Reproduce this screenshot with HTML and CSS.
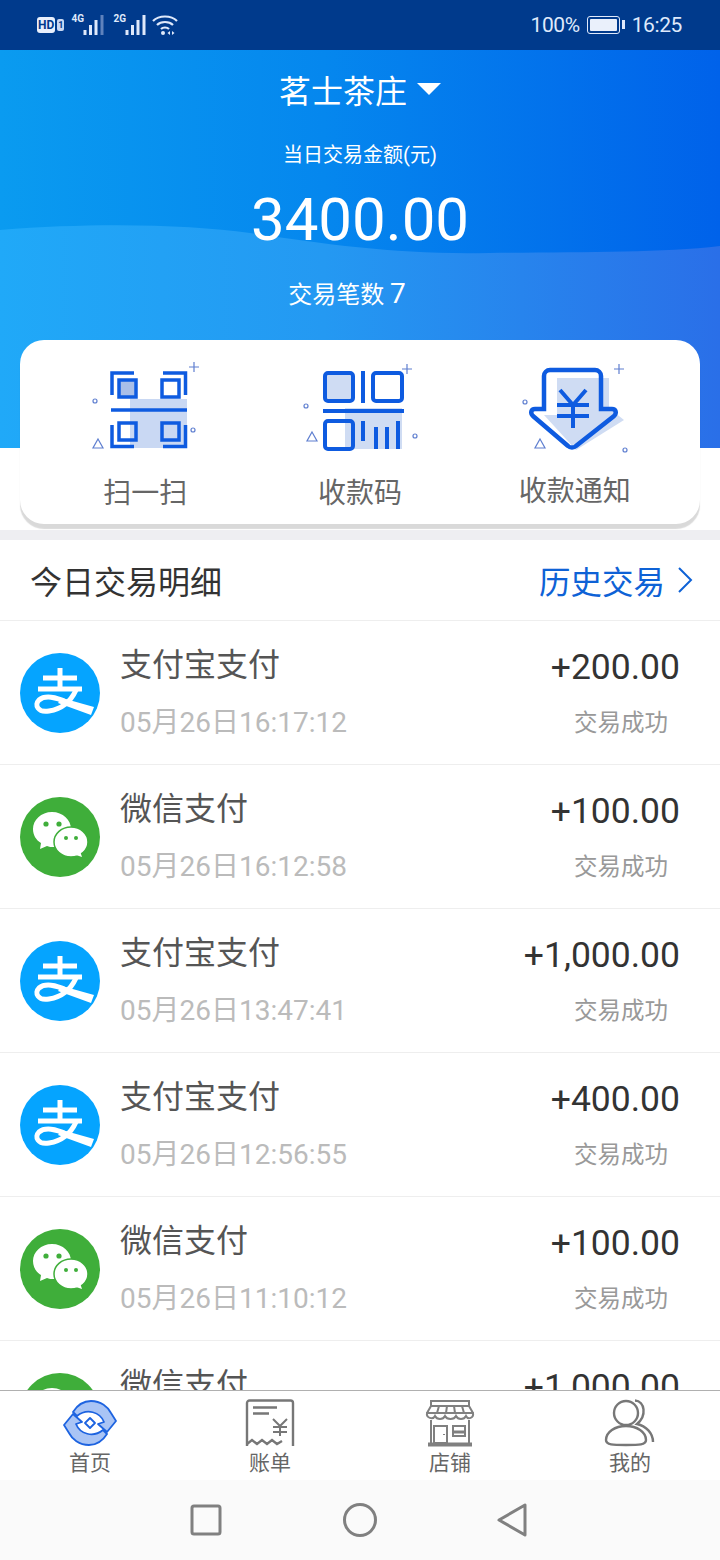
FILE: index.html
```html
<!DOCTYPE html>
<html lang="zh-CN">
<head>
    <meta charset="UTF-8">
    <meta name="viewport" content="width=device-width, initial-scale=1.0">
    <title>今日交易明细</title>
    <link rel="stylesheet" href="styles.css">
</head>
<body>
    <svg class="sprites" width="0" height="0">
        <symbol id="alipay" viewBox="0 0 80 80">
            <circle cx="40" cy="40" r="40" fill="#05a4ff"/>
            <g fill="none" stroke="#fff" stroke-width="5">
                <path d="M23 25H57M40 15V35M18 36H62"/>
                <path d="M56 37C51 48 42 56 29 58C18 60 14 52 19 47C25 42 36 44 46 49"/>
            </g>
            <path d="M42 45L74 54L71 62L38 50Z" fill="#fff"/>
        </symbol>
        <symbol id="wechat" viewBox="0 0 80 80">
            <circle cx="40" cy="40" r="40" fill="#3fae3a"/>
            <path d="M32 15C21 15 13 23 13 32C13 38 16 43 21 46L20 52L27 49C29 50 31 50 34 50C46 50 51 42 51 32C51 23 43 15 32 15Z" fill="#fff"/>
            <ellipse cx="51" cy="45" rx="17" ry="15" fill="#fff" stroke="#3fae3a" stroke-width="1.500"/>
            <path d="M56 58L62 60L60 54Z" fill="#fff"/>
            <circle cx="26" cy="27" r="2.600" fill="#3fae3a"/>
            <circle cx="39" cy="27" r="2.600" fill="#3fae3a"/>
            <circle cx="46" cy="41" r="2" fill="#3fae3a"/>
            <circle cx="56" cy="41" r="2" fill="#3fae3a"/>
        </symbol>
        <symbol id="signal" viewBox="0 0 22 22">
            <path d="M2 16V21M7.500 11V21M13 6V21M19 1V21" fill="none" stroke="#dfe9fb" stroke-width="3"/>
        </symbol>
        <symbol id="signal-weak" viewBox="0 0 22 22">
            <path d="M2 16V21M7.500 11V21M13 6V21" fill="none" stroke="#dfe9fb" stroke-width="3"/>
            <path d="M19 1V21" fill="none" stroke="#5f82bd" stroke-width="3"/>
        </symbol>
    </svg>

    <div class="screen">
        <div class="status-bar">
            <div class="status-left">
                <span class="hd">HD</span><span class="hd-sim">1</span>
                <span class="net">4G</span><svg class="signal"><use href="#signal-weak"/></svg>
                <span class="net net-second">2G</span><svg class="signal"><use href="#signal"/></svg>
                <svg class="wifi" width="26" height="22" viewBox="0 0 26 22">
                    <g fill="none" stroke="#dfe9fb" stroke-width="2.200">
                        <path d="M1 7C7 1 19 1 25 7"/>
                        <path d="M5 11C9 7 17 7 21 11"/>
                        <path d="M9 15C11 13 15 13 17 15"/>
                    </g>
                    <circle cx="11" cy="19" r="2" fill="#dfe9fb"/>
                    <path d="M18 17V21L15.500 19ZM20 17V21L22.500 19Z" fill="#dfe9fb"/>
                </svg>
            </div>
            <div class="status-right">
                <span>100%</span>
                <span class="battery"><span class="battery-fill"></span></span>
                <span>16:25</span>
            </div>
        </div>

        <div class="main">
            <div class="hero">
                <svg class="hero-wave" viewBox="0 0 720 398" preserveAspectRatio="none">
                    <defs>
                        <linearGradient id="waveFill" x1="0" y1="0" x2="1" y2="0">
                            <stop offset="0" stop-color="#20a9f8"/>
                            <stop offset="0.45" stop-color="#2499f2"/>
                            <stop offset="1" stop-color="#2a6fe8"/>
                        </linearGradient>
                    </defs>
                    <path d="M0 180C100 172 190 175 250 183C330 195 400 205 490 203C580 202 660 203 720 196V398H0Z" fill="url(#waveFill)"/>
                </svg>
                <div class="hero-title">茗士茶庄<span class="caret"></span></div>
                <div class="hero-sub">当日交易金额(元)</div>
                <div class="hero-amount">3400.00</div>
                <div class="hero-count">交易笔数 <span class="hero-count-num">7</span></div>
            </div>

            <div class="actions-wrap">
                <div class="actions">
                    <div class="action">
                        <svg class="action-icon" viewBox="0 0 130 100">
                            <rect x="50" y="41" width="57" height="49" fill="#c9d8f3"/>
                            <rect x="39" y="22" width="17" height="17" fill="#a9bfe8"/>
                            <g fill="none" stroke="#0e5be0" stroke-width="3.500">
                                <path d="M54 15H32V37M83 15H105.500V37M32 67V88.500H54M105.500 67V88.500H83"/>
                                <rect x="39" y="22" width="17" height="17"/>
                                <rect x="82" y="22" width="17" height="17"/>
                                <rect x="39" y="65" width="17" height="17"/>
                                <rect x="82" y="65" width="17" height="17"/>
                                <path d="M31 52H107"/>
                            </g>
                            <g fill="none" stroke="#5f7fd0" stroke-width="1.200">
                                <path d="M114 4V14M109 9H119"/>
                                <circle cx="15" cy="43" r="2"/>
                                <circle cx="113" cy="72" r="2"/>
                                <path d="M18 81L23 90H13Z"/>
                            </g>
                        </svg>
                        <div class="action-label">扫一扫</div>
                    </div>
                    <div class="action">
                        <svg class="action-icon" viewBox="0 0 130 100">
                            <rect x="30" y="15" width="28" height="28" rx="3" fill="#cfdcf3"/>
                            <rect x="50" y="50" width="57" height="41" fill="#cfdcf3"/>
                            <g fill="none" stroke="#0e5be0" stroke-width="4">
                                <rect x="30" y="15" width="28" height="28" rx="3"/>
                                <rect x="78" y="15" width="29" height="28" rx="3"/>
                                <rect x="30" y="63" width="28" height="28" rx="3"/>
                                <path d="M68 13V45M28 53H109M68 63V83M81 69V91M92 69V91M103 63V91"/>
                            </g>
                            <g fill="none" stroke="#5f7fd0" stroke-width="1.200">
                                <path d="M112 6V16M107 11H117"/>
                                <circle cx="11" cy="48" r="2"/>
                                <circle cx="120" cy="78" r="2"/>
                                <path d="M17 74L22 83H12Z"/>
                            </g>
                        </svg>
                        <div class="action-label">收款码</div>
                    </div>
                    <div class="action action-alt">
                        <svg class="action-icon" viewBox="0 0 130 100">
                            <path d="M47 20H99V50L114 62L66 92L34 57H47Z" fill="#cfdcf3"/>
                            <path d="M34 18A6 6 0 0 1 40 12H85A6 6 0 0 1 91 18V51H102C106 51 107 55 104 58L66 88C64 90 60 90 58 88L23 58C20 55 21 51 25 51H34Z" fill="none" stroke="#0e5be0" stroke-width="4.500"/>
                            <path d="M50 32L63 47L76 32M47 47H79M47 58H79M63 47V70" fill="none" stroke="#0e5be0" stroke-width="4"/>
                            <g fill="none" stroke="#5f7fd0" stroke-width="1.200">
                                <path d="M109 6V16M104 11H114"/>
                                <circle cx="15" cy="44" r="2"/>
                                <circle cx="115" cy="92" r="2"/>
                                <path d="M30 81L35 90H25Z"/>
                            </g>
                        </svg>
                        <div class="action-label">收款通知</div>
                    </div>
                </div>
            </div>

            <div class="section-gap"></div>

            <div class="list-head">
                <span class="list-title">今日交易明细</span>
                <span class="list-link">历史交易
                    <svg class="chevron" width="16" height="28" viewBox="0 0 16 28">
                        <path d="M2 2L14 14L2 26" fill="none" stroke="#0e62d6" stroke-width="2"/>
                    </svg>
                </span>
            </div>

            <div class="trade">
                <svg class="trade-icon"><use href="#alipay"/></svg>
                <div class="trade-info">
                    <div class="trade-name">支付宝支付</div>
                    <div class="trade-time">05月26日16:17:12</div>
                </div>
                <div class="trade-side">
                    <div class="trade-amount">+200.00</div>
                    <div class="trade-state">交易成功</div>
                </div>
            </div>
            <div class="trade">
                <svg class="trade-icon"><use href="#wechat"/></svg>
                <div class="trade-info">
                    <div class="trade-name">微信支付</div>
                    <div class="trade-time">05月26日16:12:58</div>
                </div>
                <div class="trade-side">
                    <div class="trade-amount">+100.00</div>
                    <div class="trade-state">交易成功</div>
                </div>
            </div>
            <div class="trade">
                <svg class="trade-icon"><use href="#alipay"/></svg>
                <div class="trade-info">
                    <div class="trade-name">支付宝支付</div>
                    <div class="trade-time">05月26日13:47:41</div>
                </div>
                <div class="trade-side">
                    <div class="trade-amount">+1,000.00</div>
                    <div class="trade-state">交易成功</div>
                </div>
            </div>
            <div class="trade">
                <svg class="trade-icon"><use href="#alipay"/></svg>
                <div class="trade-info">
                    <div class="trade-name">支付宝支付</div>
                    <div class="trade-time">05月26日12:56:55</div>
                </div>
                <div class="trade-side">
                    <div class="trade-amount">+400.00</div>
                    <div class="trade-state">交易成功</div>
                </div>
            </div>
            <div class="trade">
                <svg class="trade-icon"><use href="#wechat"/></svg>
                <div class="trade-info">
                    <div class="trade-name">微信支付</div>
                    <div class="trade-time">05月26日11:10:12</div>
                </div>
                <div class="trade-side">
                    <div class="trade-amount">+100.00</div>
                    <div class="trade-state">交易成功</div>
                </div>
            </div>
            <div class="trade">
                <svg class="trade-icon"><use href="#wechat"/></svg>
                <div class="trade-info">
                    <div class="trade-name">微信支付</div>
                </div>
                <div class="trade-side">
                    <div class="trade-amount">+1,000.00</div>
                </div>
            </div>
        </div>

        <div class="tab-bar">
            <div class="tab">
                <svg class="tab-icon" viewBox="0 0 54 48">
                    <g fill="#a9c4f5" stroke="#1d63e0" stroke-width="1.800" stroke-linejoin="round">
                        <path d="M10 13C15 5 22 2 28 2C38 2 45 8 48 14L53 22L44 33L35 25L41 23C37 13 24 9 14 17Z"/>
                        <path transform="rotate(180 27 24)" d="M10 13C15 5 22 2 28 2C38 2 45 8 48 14L53 22L44 33L35 25L41 23C37 13 24 9 14 17Z"/>
                        <path d="M27 19L32 24L27 29L22 24Z" fill="#fff"/>
                    </g>
                </svg>
                <span class="tab-label">首页</span>
            </div>
            <div class="tab">
                <svg class="tab-icon" viewBox="0 0 54 48">
                    <g fill="none" stroke="#777" stroke-width="2.400">
                        <path d="M50 47V4A2.500 2.500 0 0 0 47.500 1.500H6.500A2.500 2.500 0 0 0 4 4V47"/>
                        <path d="M4 45L9 41L14 45L19 41L24 45L29 41L34 45L39 42"/>
                        <path d="M10 8.500H34M10 14.500H26"/>
                    </g>
                    <path d="M30 20L37 27L44 20M30 28H44M30 33H44M37 27V37" fill="none" stroke="#777" stroke-width="2"/>
                </svg>
                <span class="tab-label">账单</span>
            </div>
            <div class="tab">
                <svg class="tab-icon" viewBox="0 0 54 48">
                    <g fill="none" stroke="#808080" stroke-width="2">
                        <path d="M8 2H46V7H8ZM8 7L4 14M46 7L50 14M16 7L14 14M24 7L23 14M31 7L32 14M39 7L41 14"/>
                        <path d="M4 14H50C51 19 45 21 43 17C41 21 35 21 33 17C31 21 24 21 22 17C20 21 14 21 12 17C10 21 3 19 4 14Z"/>
                        <path d="M8 21V44M46 21V44M11 27H24V44H11ZM21 35V36"/>
                        <rect x="30" y="27" width="12" height="10"/>
                        <path d="M30 33H42" stroke-width="3"/>
                        <path d="M5 45.500H49" stroke-width="4"/>
                    </g>
                </svg>
                <span class="tab-label">店铺</span>
            </div>
            <div class="tab">
                <svg class="tab-icon" viewBox="0 0 54 48">
                    <g fill="none" stroke="#777" stroke-width="2.400">
                        <circle cx="23" cy="14" r="12"/>
                        <path d="M3 41C3 33 12 27 23 27C34 27 43 33 43 41C43 46 36 46 23 46C10 46 3 46 3 41Z"/>
                        <path d="M32 1.500C42 2 44 17 34 25C43 27 50 34 50 43"/>
                    </g>
                </svg>
                <span class="tab-label">我的</span>
            </div>
        </div>

        <div class="nav-bar">
            <svg class="nav-icon" viewBox="0 0 36 36">
                <rect x="4" y="4" width="28" height="28" rx="2" fill="none" stroke="#808080" stroke-width="3"/>
            </svg>
            <svg class="nav-icon" viewBox="0 0 36 36">
                <circle cx="18" cy="18" r="15.500" fill="none" stroke="#808080" stroke-width="3"/>
            </svg>
            <svg class="nav-icon" viewBox="0 0 36 36">
                <path d="M3 18L29 3V33Z" fill="none" stroke="#808080" stroke-width="3" stroke-linejoin="round"/>
            </svg>
        </div>
    </div>
</body>
</html>
```

FILE: styles.css
```css
body {
    margin: 0;
    padding: 0;
    background-color: #fff;
    font-family: Roboto, "Noto Sans CJK SC", sans-serif;
}
.sprites {
    display: block;
    height: 0;
}
.screen {
    display: flex;
    flex-direction: column;
    width: 720px;
    height: 1560px;
    overflow: hidden;
}

/* status bar */
.status-bar {
    flex: 0 0 50px;
    display: flex;
    justify-content: space-between;
    align-items: center;
    padding: 0 38px 0 37px;
    box-sizing: border-box;
    background-color: #003a8c;
    color: #dfe9fb;
}
.status-left {
    display: flex;
    align-items: center;
}
.hd {
    padding: 0 1px;
    border-radius: 3px;
    background-color: #e8effc;
    color: #003a8c;
    font-size: 12px;
    line-height: 16px;
    font-weight: 700;
}
.hd-sim {
    margin-left: 2px;
    padding: 0 1px;
    border-radius: 2px;
    background-color: #c8d8f4;
    color: #003a8c;
    font-size: 9px;
    line-height: 12px;
    font-weight: 700;
}
.net {
    align-self: flex-start;
    margin-left: 7px;
    width: 12px;
    font-size: 10px;
    line-height: 10px;
    font-weight: 700;
}
.net-second {
    margin-left: 8px;
}
.signal {
    width: 22px;
    height: 22px;
}
.wifi {
    margin-left: 5px;
}
.status-right {
    display: flex;
    align-items: center;
    gap: 7px;
    font-size: 21px;
    line-height: 30px;
    letter-spacing: -0.4px;
}
.battery {
    position: relative;
    display: block;
    width: 33px;
    height: 18px;
    margin-right: 5px;
    padding: 2px;
    box-sizing: border-box;
    border: 1.500px solid #dfe9fb;
    border-radius: 3px;
}
.battery::after {
    content: "";
    position: absolute;
    right: -6px;
    top: 3px;
    width: 3px;
    height: 9px;
    background-color: #dfe9fb;
}
.battery-fill {
    display: block;
    height: 100%;
    background-color: #eaf0fb;
    border-radius: 1px;
}

/* scroll area */
.main {
    flex: 1;
    min-height: 0;
    overflow: hidden;
    background-color: #fff;
}

/* blue header */
.hero {
    position: relative;
    height: 398px;
    box-sizing: border-box;
    padding-top: 22px;
    background: linear-gradient(90deg, #0a9bf0 0%, #0587ee 45%, #0062ea 100%);
    color: #fff;
    text-align: center;
}
.hero-wave {
    position: absolute;
    left: 0;
    top: 0;
    width: 100%;
    height: 100%;
}
.hero-title,
.hero-sub,
.hero-amount,
.hero-count {
    position: relative;
}
.hero-title {
    font-size: 32px;
    line-height: 40px;
}
.caret {
    display: inline-block;
    width: 0;
    height: 0;
    margin-left: 10px;
    border-left: 12px solid transparent;
    border-right: 12px solid transparent;
    border-top: 12px solid #fff;
    vertical-align: 8px;
}
.hero-sub {
    margin-top: 28px;
    font-size: 20px;
    line-height: 30px;
}
.hero-amount {
    margin-top: 15px;
    font-size: 60px;
    line-height: 70px;
}
.hero-count {
    margin-top: 24px;
    padding-right: 26px;
    font-size: 24px;
    line-height: 30px;
}
.hero-count-num {
    font-size: 28px;
}

/* quick actions */
.actions-wrap {
    padding: 0 20px 6px;
}
.actions {
    position: relative;
    display: grid;
    grid-template-columns: repeat(3, 1fr);
    height: 184px;
    box-sizing: border-box;
    margin-top: -108px;
    padding: 18px 18px 0;
    border-radius: 24px;
    background-color: #fff;
    box-shadow: 0 5px 1px rgba(0, 0, 0, 0.15);
}
.action {
    text-align: center;
}
.action-icon {
    display: block;
    width: 130px;
    height: 100px;
    margin: 0 auto;
}
.action-label {
    margin-top: 16px;
    color: #666;
    font-size: 28px;
    line-height: 40px;
}
.action-alt .action-label {
    margin-top: 14px;
}
.section-gap {
    height: 10px;
    background-color: #eeeef2;
}

/* trade list */
.list-head {
    display: flex;
    justify-content: space-between;
    align-items: center;
    height: 81px;
    box-sizing: border-box;
    padding: 0 27px 0 30px;
    border-bottom: 1px solid #eee;
}
.list-title {
    color: #333;
    font-size: 32px;
}
.list-link {
    display: flex;
    align-items: center;
    gap: 12px;
    color: #0e62d6;
    font-size: 31.500px;
}
.trade {
    display: flex;
    align-items: center;
    height: 144px;
    box-sizing: border-box;
    padding: 0 40px 0 20px;
    border-bottom: 1px solid #eee;
}
.trade-icon {
    flex: 0 0 80px;
    width: 80px;
    height: 80px;
}
.trade-info {
    flex: 1;
    align-self: flex-start;
    margin-left: 20px;
    padding-top: 24px;
}
.trade-name {
    color: #555;
    font-size: 32px;
    line-height: 40px;
}
.trade-time {
    margin-top: 18px;
    color: #bbb;
    font-size: 28px;
    line-height: 40px;
}
.trade-side {
    align-self: flex-start;
    padding-top: 26px;
    text-align: right;
}
.trade-amount {
    color: #333;
    font-size: 35.500px;
    line-height: 40px;
}
.trade-state {
    margin-top: 16px;
    margin-right: 12px;
    color: #999;
    font-size: 23.500px;
    line-height: 40px;
}

/* bottom tabs */
.tab-bar {
    flex: 0 0 90px;
    display: grid;
    grid-template-columns: repeat(4, 1fr);
    box-sizing: border-box;
    border-top: 1px solid #b0b0b0;
    background-color: #fff;
}
.tab {
    display: flex;
    flex-direction: column;
    align-items: center;
    padding-top: 8px;
}
.tab-icon {
    display: block;
    width: 54px;
    height: 48px;
}
.tab-label {
    margin-top: 3px;
    color: #666;
    font-size: 21px;
    line-height: 26px;
}

/* system nav */
.nav-bar {
    flex: 0 0 80px;
    display: grid;
    grid-template-columns: 36px 36px 36px;
    justify-content: center;
    align-items: center;
    column-gap: 118px;
    background-color: #fafafa;
}
.nav-icon {
    display: block;
    width: 36px;
    height: 36px;
}
```
